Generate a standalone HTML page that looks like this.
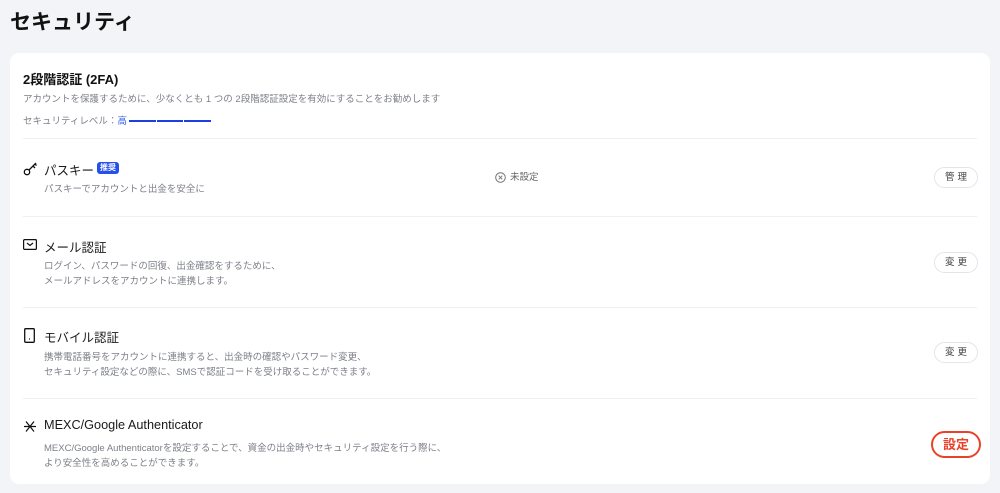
<!DOCTYPE html>
<html><head><meta charset="utf-8"><style>
*{margin:0;padding:0;box-sizing:border-box}
body{width:1000px;height:493px;background:#f3f4f7;font-family:"Liberation Sans","Noto Sans CJK JP",sans-serif;position:relative;overflow:hidden;color:#111}
.a{position:absolute;white-space:nowrap}
h1{position:absolute;left:10px;top:6px;font-size:21px;font-weight:700;color:#111}
.card{position:absolute;left:10px;top:53px;width:980px;height:431px;background:#fff;border-radius:9px}
.hr{position:absolute;left:23px;width:954px;height:1px;background:#eef0f3}
.t{font-size:12.5px;color:#1a1a1a}
.d{font-size:9.5px;color:#7d8089;line-height:15px}
.btn{position:absolute;left:934px;width:44px;height:21px;border:1px solid #e3e5ea;border-radius:11px;font-size:9.5px;color:#444;text-align:center;line-height:19px;letter-spacing:3px;padding-left:3px}
</style></head><body>
<h1>セキュリティ</h1>
<div class="card"></div>
<div class="a" style="left:23px;top:69px;font-size:13px;font-weight:700">2段階認証 (2FA)</div>
<div class="a d" style="left:23px;top:92px">アカウントを保護するために、少なくとも 1 つの 2段階認証設定を有効にすることをお勧めします</div>
<div class="a d" style="left:23px;top:114px">セキュリティレベル：<span style="color:#2f5bea">高</span></div>
<div class="a" style="left:129px;top:120px;width:82px;height:2px;background:#1d3fe0"></div>
<div class="a" style="left:156px;top:120px;width:1px;height:2px;background:#fff"></div>
<div class="a" style="left:183px;top:120px;width:1px;height:2px;background:#fff"></div>
<div class="hr" style="top:138px"></div>

<svg class="a" style="left:23px;top:162px" width="15" height="14" viewBox="0 0 15 14" fill="none" stroke="#111" stroke-width="1.3"><circle cx="4" cy="10" r="2.7"/><path d="M6 8L13 1M10 4l2 2M12 2l1.5 1.5"/></svg>
<div class="a t" style="left:44px;top:160px">パスキー</div>
<div class="a" style="left:97px;top:162px;background:#2651e8;color:#fff;font-size:8px;font-weight:700;padding:1px 3px;border-radius:3px;line-height:10px">推奨</div>
<div class="a d" style="left:44px;top:182px">パスキーでアカウントと出金を安全に</div>
<svg class="a" style="left:495px;top:172px" width="11" height="11" viewBox="0 0 11 11" fill="none" stroke="#777" stroke-width="1"><circle cx="5.5" cy="5.5" r="4.8"/><path d="M3.7 3.7l3.6 3.6M7.3 3.7l-3.6 3.6"/></svg>
<div class="a d" style="left:510px;top:170px;color:#666">未設定</div>
<div class="btn" style="top:167px">管理</div>
<div class="hr" style="top:216px"></div>

<svg class="a" style="left:23px;top:239px" width="14" height="11" viewBox="0 0 14 11" fill="none" stroke="#111" stroke-width="1.2"><rect x="0.6" y="0.6" width="12.8" height="9.8" rx="1"/><path d="M4 4l3 2.5L10 4"/></svg>
<div class="a t" style="left:44px;top:237px">メール認証</div>
<div class="a d" style="left:44px;top:259px">ログイン、パスワードの回復、出金確認をするために、<br>メールアドレスをアカウントに連携します。</div>
<div class="btn" style="top:252px">変更</div>
<div class="hr" style="top:307px"></div>

<svg class="a" style="left:24px;top:328px" width="11" height="15" viewBox="0 0 11 15" fill="none" stroke="#111" stroke-width="1.3"><rect x="0.7" y="0.7" width="9.6" height="13.6" rx="1"/><path d="M5 11h1"/></svg>
<div class="a t" style="left:44px;top:327px">モバイル認証</div>
<div class="a d" style="left:44px;top:350px">携帯電話番号をアカウントに連携すると、出金時の確認やパスワード変更、<br>セキュリティ設定などの際に、SMSで認証コードを受け取ることができます。</div>
<div class="btn" style="top:342px">変更</div>
<div class="hr" style="top:398px"></div>

<svg class="a" style="left:23px;top:420px" width="14" height="13" viewBox="0 0 14 13" fill="none" stroke="#111" stroke-width="1.2"><path d="M1 6.5h12M3 1.5l8 10M11 1.5l-8 10"/></svg>
<div class="a t" style="left:44px;top:418px;font-size:12.7px">MEXC/Google Authenticator</div>
<div class="a d" style="left:44px;top:441px">MEXC/Google Authenticatorを設定することで、資金の出金時やセキュリティ設定を行う際に、<br>より安全性を高めることができます。</div>
<div class="a" style="left:931px;top:431px;width:50px;height:27px;border:2px solid #e8432a;border-radius:14px;color:#e8432a;font-size:13px;font-weight:700;text-align:center;line-height:23px">設定</div>
</body></html>
